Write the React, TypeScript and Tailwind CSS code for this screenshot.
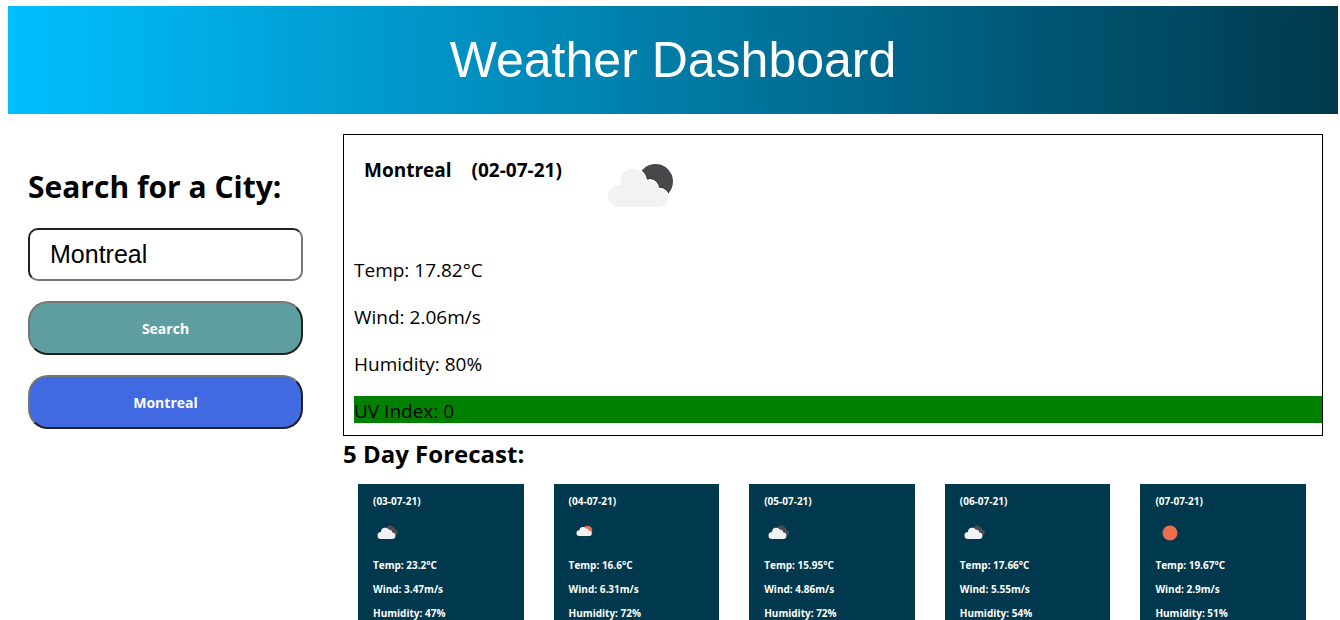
import React from "react";

type Sky = "clouds" | "rain" | "clear";

interface Day {
  date: string;
  sky: Sky;
  temp: string;
  wind: string;
  humidity: string;
}

const days: Day[] = [
  { date: "03-07-21", sky: "clouds", temp: "23.2", wind: "3.47", humidity: "47" },
  { date: "04-07-21", sky: "rain", temp: "16.6", wind: "6.31", humidity: "72" },
  { date: "05-07-21", sky: "clouds", temp: "15.95", wind: "4.86", humidity: "72" },
  { date: "06-07-21", sky: "clouds", temp: "17.66", wind: "5.55", humidity: "54" },
  { date: "07-07-21", sky: "clear", temp: "19.67", wind: "2.9", humidity: "51" },
];

function CloudShape() {
  return (
    <>
      <circle cx="29" cy="56" r="11" />
      <circle cx="43" cy="41.500" r="12.500" />
      <circle cx="60" cy="48" r="7.500" />
      <circle cx="69" cy="58" r="9" />
      <path d="M29 50L34 42H56L69 52V67H29z" />
    </>
  );
}

function PartlyCloudyNight() {
  return (
    <svg viewBox="0 0 100 100" className="size-[100px]" role="img" aria-label="Few clouds">
      <circle cx="65.500" cy="41.500" r="17.500" fill="#48484a" />
      <g fill="#2b2b2d" stroke="#2b2b2d" strokeWidth="4.500" clipPath="url(#moon)">
        <CloudShape />
      </g>
      <clipPath id="moon">
        <circle cx="65.500" cy="41.500" r="17.500" />
      </clipPath>
      <g fill="#fff" stroke="#fff" strokeWidth="3">
        <CloudShape />
      </g>
      <g fill="#f2f2f2">
        <CloudShape />
      </g>
    </svg>
  );
}

function DayIcon({ sky }: { sky: Sky }) {
  return (
    <svg viewBox="0 0 30 30" className="block size-[30px]" role="img" aria-label={sky}>
      {sky === "clouds" && (
        <>
          <path
            d="M13 11a4 4 0 0 1 7.300 -2a2.600 2.600 0 0 1 2 2.800a2.700 2.700 0 0 1 2.200 4.200a2.400 2.400 0 0 1 -2 1.500l-5 -1z"
            fill="#4d4d4f"
          />
          <path
            d="M8 21a3.500 3.500 0 0 1 0 -7a4.300 4.300 0 0 1 8 -2.200a3 3 0 0 1 3.200 2.800a3.200 3.200 0 0 1 0 6.400z"
            fill="#f2f2f2"
          />
        </>
      )}
      {sky === "rain" && (
        <>
          <circle cx="18.500" cy="12.500" r="4.800" fill="#ec6e4c" />
          <path
            d="M10.300 18a2.900 2.900 0 0 1 0 -5.800a3.700 3.700 0 0 1 6.700 -1.700a2.300 2.300 0 0 1 2.800 2.300a2.600 2.600 0 0 1 .7 5.200z"
            fill="#f2f2f2"
          />
          <path d="M12.500 19.500l-.6 1.500M15.500 19.500l-1 3M18 19.500l-.6 1.500" stroke="#48484a" strokeWidth="0.800" />
        </>
      )}
      {sky === "clear" && <circle cx="15" cy="15" r="7.500" fill="#ec6e4c" />}
    </svg>
  );
}

export default function App() {
  return (
    <div className="bg-white pt-1.5 pl-2 font-['Open_Sans','Noto_Sans',sans-serif] text-black">
      <header className="mr-0.5 bg-linear-to-r/srgb from-[#00bfff] to-[#00394d] py-[25px] text-center font-['Liberation_Sans',Arial,sans-serif] text-white">
        <h1 className="text-[50px] leading-[58px]">Weather Dashboard</h1>
      </header>

      <div className="flex pt-5">
        <aside className="w-[315px] shrink-0 px-5 pt-8">
          <form onSubmit={(e) => e.preventDefault()}>
            <label htmlFor="city" className="block whitespace-nowrap text-[30px] leading-[42px] font-bold">
              Search for a City:
            </label>
            <input
              id="city"
              type="text"
              defaultValue="Montreal"
              className="mt-5 block h-[53px] w-full rounded-[10px] border-2 border-t-[#212121] border-r-[#767676] border-b-[#767676] border-l-[#212121] px-5 font-['Liberation_Sans',Arial,sans-serif] text-[25px]"
            />
            <button
              type="submit"
              className="mt-5 block h-[54px] w-full rounded-[20px] border-2 border-t-[#767676] border-r-[#212121] border-b-[#212121] border-l-[#767676] bg-[#5f9ea0] text-[14px] font-bold text-white"
            >
              Search
            </button>
          </form>
          <button
            type="button"
            className="mt-5 block h-[54px] w-full rounded-[20px] border-2 border-t-[#767676] border-r-[#212121] border-b-[#212121] border-l-[#767676] bg-[#4169e1] text-[14px] font-bold text-white"
          >
            Montreal
          </button>
        </aside>

        <main className="ml-5 min-w-0 flex-1 pr-[17px]">
          <section className="border border-black pb-3 pl-2.5">
            <div className="flex h-[120px] pl-2.5">
              <h2 className="mt-[22px] text-[19px] leading-[27px] font-bold">Montreal</h2>
              <h2 className="mt-[22px] ml-5 text-[19px] leading-[27px] font-bold">(02-07-21)</h2>
              <div className="mt-[5px] ml-7">
                <PartlyCloudyNight />
              </div>
            </div>
            <div className="flex flex-col gap-5 text-[19px] leading-[23px] *:pt-1">
              <p>Temp: 17.82°C</p>
              <p>Wind: 2.06m/s</p>
              <p>Humidity: 80%</p>
              <p className="bg-[#008000]">UV Index: 0</p>
            </div>
          </section>

          <h2 className="text-[24px] leading-9 font-bold">5 Day Forecast:</h2>
          <div className="mt-3 grid grid-cols-5 gap-[30px] pr-[17px] pl-[15px]">
            {days.map((day) => (
              <article key={day.date} className="bg-[#00394d] px-[15px] py-2.5 text-[10px] leading-[14px] font-bold text-white">
                <h3>({day.date})</h3>
                <div className="mt-2.5 mb-2.5">
                  <DayIcon sky={day.sky} />
                </div>
                <div className="flex flex-col gap-2.5">
                  <p>Temp: {day.temp}°C</p>
                  <p>Wind: {day.wind}m/s</p>
                  <p>Humidity: {day.humidity}%</p>
                </div>
              </article>
            ))}
          </div>
        </main>
      </div>
    </div>
  );
}
